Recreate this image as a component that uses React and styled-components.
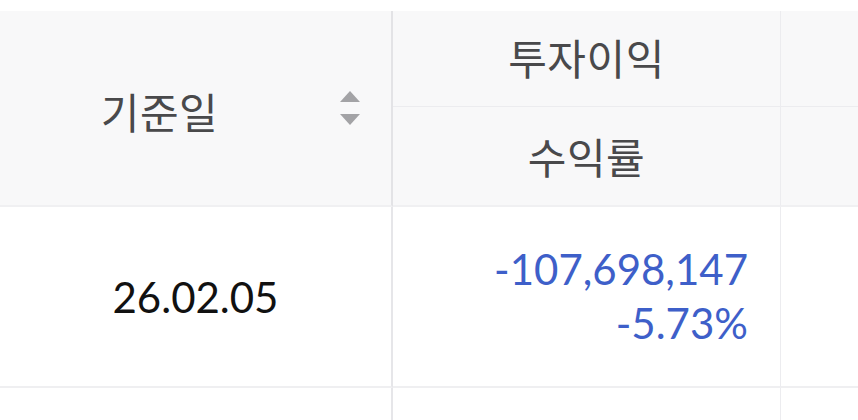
import React from "react";
import styled, { createGlobalStyle } from "styled-components";

const GlobalStyle = createGlobalStyle`
  html, body {
    margin: 0;
    padding: 0;
    background: #ffffff;
  }
  body {
    font-family: Lato, "Noto Sans CJK KR", sans-serif;
  }
`;

const rows = [
  { date: "26.02.05", profit: "-107,698,147", rate: "-5.73%" },
  { date: "", profit: "", rate: "" },
];

const App = () => {
  return (
    <>
      <GlobalStyle />
      <Page>
        <Table>
          <HeadCell $span>
            <SortLabel>
              <HeadText>기준일</HeadText>
            </SortLabel>
            <SortIcon width="22" height="36" viewBox="0 0 22 36">
              <path d="M11 1 L21 12 L1 12 Z" />
              <path d="M1 24 L21 24 L11 35 Z" />
            </SortIcon>
          </HeadCell>
          <HeadCell $top>
            <HeadText>투자이익</HeadText>
          </HeadCell>
          <HeadCell $top $last />
          <HeadCell $bottom>
            <HeadText>수익률</HeadText>
          </HeadCell>
          <HeadCell $bottom $last />

          {rows.map((r, i) => (
            <React.Fragment key={`row-${i}`}>
              <DateCell>{r.date}</DateCell>
              <ValueCell $negative>
                {r.profit && <span>{r.profit}</span>}
                {r.rate && <span>{r.rate}</span>}
              </ValueCell>
              <EmptyCell />
            </React.Fragment>
          ))}
        </Table>
      </Page>
    </>
  );
};

export default App;

const Page = styled.div`
  width: 858px;
  height: 420px;
  overflow: hidden;
  padding-top: 11px;
  box-sizing: border-box;
`;

const Table = styled.div`
  display: grid;
  grid-template-columns: 393px 388px 1fr;
  grid-template-rows: 96px 100px 181px 120px;
`;

const HeadCell = styled.div`
  background: #f8f8f9;
  display: flex;
  align-items: center;
  justify-content: center;
  box-sizing: border-box;
  grid-row: ${p => (p.$span ? "1 / span 2" : "auto")};
  border-right: ${p => (p.$span ? "2px solid #e3e3e6" : p.$last ? "none" : "1px solid #ececef")};
  border-bottom: ${p =>
    p.$top ? "1px solid #ececef" : "2px solid #f0f0f2"};
  padding: ${p => (p.$span ? "4px 30px 0 0" : p.$top ? "0 0 4px" : "0 0 2px")};
`;

const SortLabel = styled.div`
  flex: 1;
  display: flex;
  justify-content: center;
  padding-right: 20px;
`;

const HeadText = styled.span`
  font-family: "Noto Sans CJK KR", sans-serif;
  font-size: 42px;
  color: #49494b;
  letter-spacing: 0.5px;
`;

const SortIcon = styled.svg`
  fill: #a3a3a6;
  flex-shrink: 0;
  margin-top: -4px;
`;

const DateCell = styled.div`
  display: flex;
  align-items: center;
  justify-content: center;
  box-sizing: border-box;
  border-right: 2px solid #e6e6e9;
  border-bottom: 2px solid #efeff1;
  font-family: Lato, sans-serif;
  font-size: 42px;
  color: #111111;
`;

const ValueCell = styled.div`
  display: flex;
  flex-direction: column;
  align-items: flex-end;
  justify-content: center;
  box-sizing: border-box;
  padding: 0 32px 2px 0;
  border-right: 1px solid #ececef;
  border-bottom: 2px solid #efeff1;
  font-family: Lato, sans-serif;
  font-size: 42px;
  line-height: 54px;
  color: ${p => (p.$negative ? "#3e5fc9" : "#d33")};
`;

const EmptyCell = styled.div`
  border-bottom: 2px solid #efeff1;
`;
